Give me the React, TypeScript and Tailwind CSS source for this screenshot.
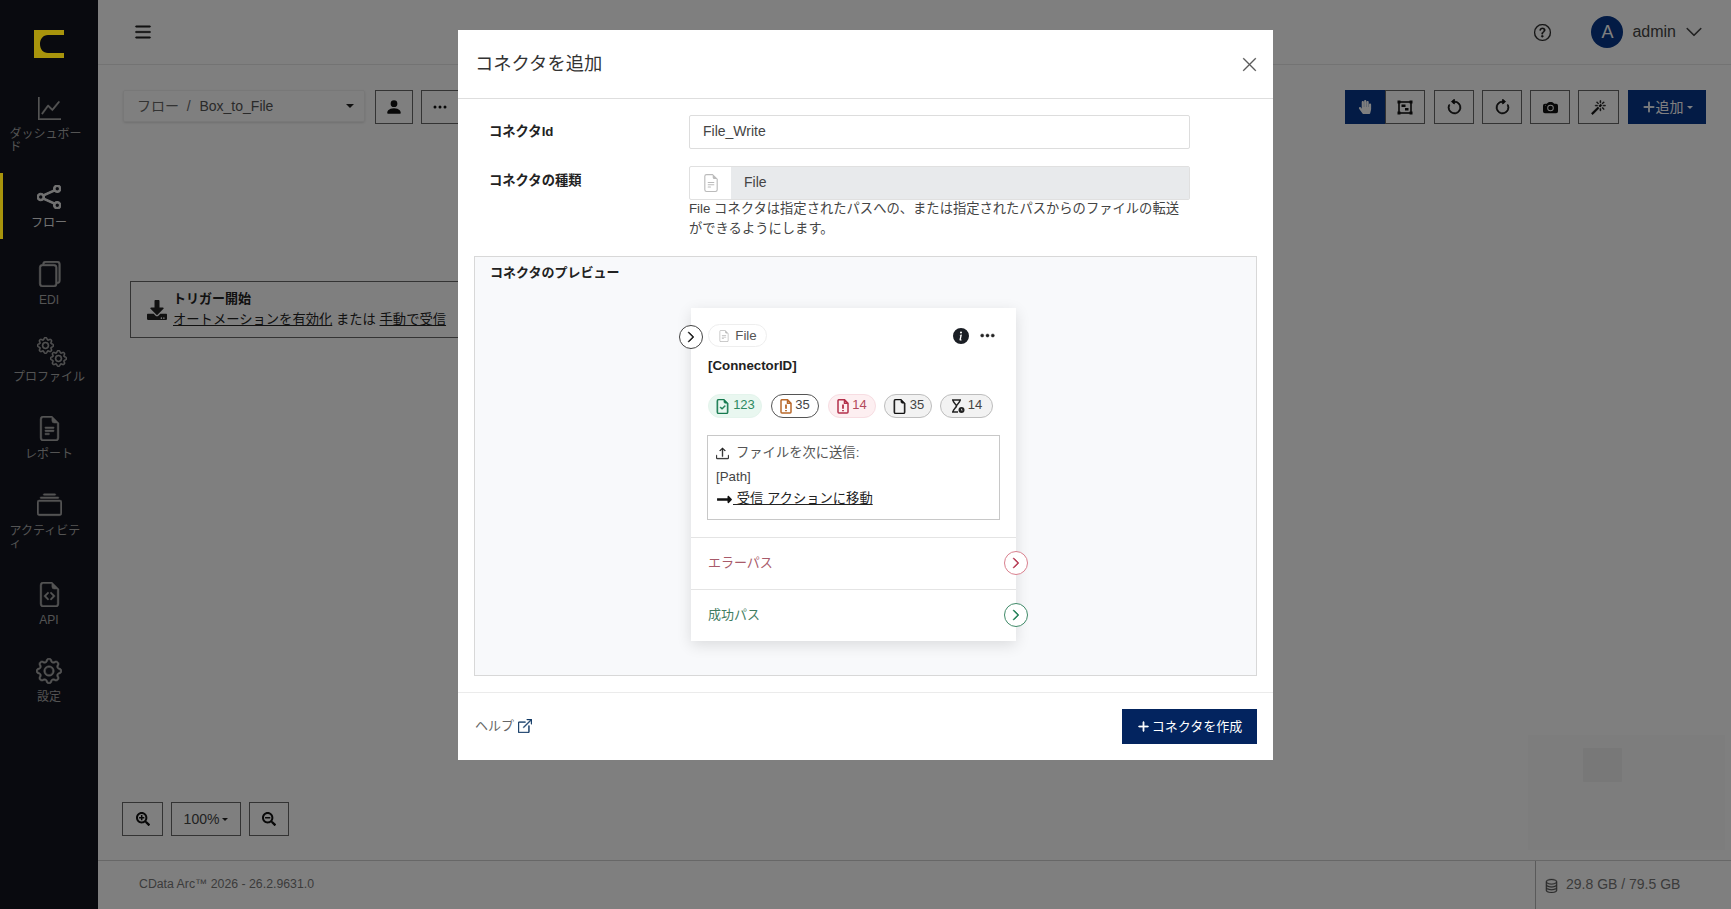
import type { ReactNode } from "react";
import {
  BsArrowClockwise,
  BsArrowCounterclockwise,
  BsBoxArrowUpRight,
  BsCameraFill,
  BsChevronDown,
  BsChevronRight,
  BsCollection,
  BsDatabase,
  BsFileEarmark,
  BsFileEarmarkCheck,
  BsFileEarmarkCode,
  BsFileEarmarkText,
  BsFiles,
  BsGear,
  BsGraphUp,
  BsInfoCircleFill,
  BsList,
  BsMagic,
  BsPersonFill,
  BsPlusLg,
  BsQuestionCircle,
  BsShare,
  BsThreeDots,
  BsUpload,
  BsXLg,
} from "react-icons/bs";
import { FaDownload, FaHandPaper, FaLongArrowAltRight, FaSearchMinus, FaSearchPlus } from "react-icons/fa";

const navItems: { label: string; icon: ReactNode; active?: boolean }[] = [
  { label: "ダッシュボード", icon: <BsGraphUp className="h-[23px] w-[23px] stroke-[0.3]" /> },
  { label: "フロー", icon: <BsShare className="h-[24px] w-[24px] stroke-[0.7]" />, active: true },
  { label: "EDI", icon: <BsFiles className="h-[26px] w-[26px] stroke-[0.3]" /> },
  {
    label: "プロファイル",
    icon: (
      <span className="relative ml-[6px] mt-[2px] block h-[30px] w-[30px]">
        <BsGear className="absolute left-0 top-0 h-[17px] w-[17px] stroke-[0.5]" />
        <BsGear className="absolute bottom-0 right-0 h-[17px] w-[17px] stroke-[0.5]" />
      </span>
    ),
  },
  { label: "レポート", icon: <BsFileEarmarkText className="h-[25px] w-[25px] stroke-[0.3]" /> },
  { label: "アクティビティ", icon: <BsCollection className="h-[25px] w-[25px] stroke-[0.3]" /> },
  { label: "API", icon: <BsFileEarmarkCode className="h-[25px] w-[25px] stroke-[0.3]" /> },
  { label: "設定", icon: <BsGear className="h-[26px] w-[26px] stroke-[0.3]" /> },
];

function Sidebar() {
  return (
    <aside className="flex w-[98px] shrink-0 flex-col bg-[#12141e]">
      <div className="relative z-20 flex h-[84px] justify-center pt-[30px]">
        <svg width="30" height="28" viewBox="0 0 30 28" fill="#a8940c">
          <path d="M0 0H30V5H14C9 5 6 9 6 14C6 19 9 23 14 23H30V28H0Z" />
        </svg>
      </div>
      <nav className="flex flex-col gap-[11px]">
        {navItems.map((item) => (
          <div
            key={item.label}
            className={`relative flex flex-col items-center pt-[10px] ${item.label.length > 6 ? "min-h-[78px]" : "min-h-[66px]"} ${
              item.active ? "text-[#e4e4e4]" : "text-[#a8a8a8]"
            }`}
          >
            {item.active && <span className="absolute inset-y-0 left-0 z-20 w-[3px] bg-[#a8940c]" />}
            <div className="flex h-[28px] items-center justify-center">{item.icon}</div>
            <div className="mt-[6px] max-w-[79px] text-left text-[12px] leading-[13px] [line-break:anywhere]">{item.label}</div>
          </div>
        ))}
      </nav>
    </aside>
  );
}

function ToolButton({ children, className = "" }: { children: ReactNode; className?: string }) {
  return (
    <div className={`flex h-[34px] items-center justify-center border border-[#666] bg-white text-[#111] ${className}`}>
      {children}
    </div>
  );
}

function TopBar() {
  return (
    <header className="flex h-[65px] shrink-0 items-center border-b border-[#e6e6e6] bg-white pl-[34px] pr-[28px]">
      <BsList className="h-[22px] w-[22px] stroke-[0.4] text-[#222]" />
      <div className="ml-auto flex items-center">
        <BsQuestionCircle className="h-[17px] w-[17px] stroke-[0.3] text-[#222]" />
        <div className="ml-[40px] flex h-[32px] w-[32px] items-center justify-center rounded-full bg-[#06378a] text-[18px] text-white">
          A
        </div>
        <span className="ml-[9px] text-[16px] text-[#444]">admin</span>
        <BsChevronDown className="ml-[9px] h-[18px] w-[18px] stroke-[0.4] text-[#333]" />
      </div>
    </header>
  );
}

function Canvas() {
  return (
    <div className="relative flex flex-1 flex-col bg-white px-[25px] pb-[24px] pt-[25px]">
      <div className="flex items-start">
        <div className="flex h-[32px] w-[242px] items-center justify-between rounded-[2px] border border-[#f0f0f0] pl-[13px] pr-[10px] text-[14px] text-[#666] shadow-sm">
          <span>
            フロー&nbsp; / &nbsp;<span className="ml-[1px] text-[#555]">Box_to_File</span>
          </span>
          <span className="h-0 w-0 border-x-[4px] border-t-[4px] border-x-transparent border-t-[#222]" />
        </div>
        <ToolButton className="ml-[10px] w-[38px]">
          <BsPersonFill className="h-[18px] w-[18px]" />
        </ToolButton>
        <ToolButton className="ml-[8px] w-[38px]">
          <BsThreeDots className="h-[16px] w-[16px]" />
        </ToolButton>
        <div className="ml-auto flex items-center">
          <div className="flex h-[34px] w-[40px] items-center justify-center bg-[#06378a] text-white">
            <FaHandPaper className="h-[14px] w-[14px]" />
          </div>
          <ToolButton className="w-[40px]">
            <svg width="16" height="15" viewBox="0 0 16 15" fill="none" stroke="#111" strokeWidth="1.6">
              <rect x="2" y="2" width="12" height="11" />
              <rect x="0.5" y="0.5" width="3" height="3" fill="#111" stroke="none" />
              <rect x="12.5" y="0.5" width="3" height="3" fill="#111" stroke="none" />
              <rect x="0.5" y="11.5" width="3" height="3" fill="#111" stroke="none" />
              <rect x="12.5" y="11.5" width="3" height="3" fill="#111" stroke="none" />
              <path d="M4.5 4.5h4v2.5h-4zM8 8h3.5v2.5H8z" fill="#111" stroke="none" />
            </svg>
          </ToolButton>
          <ToolButton className="ml-[9px] w-[40px]">
            <BsArrowCounterclockwise className="h-[17px] w-[17px] stroke-[0.7]" />
          </ToolButton>
          <ToolButton className="ml-[8px] w-[40px]">
            <BsArrowClockwise className="h-[17px] w-[17px] stroke-[0.7]" />
          </ToolButton>
          <ToolButton className="ml-[8px] w-[40px]">
            <BsCameraFill className="h-[15px] w-[15px]" />
          </ToolButton>
          <ToolButton className="ml-[8px] w-[41px]">
            <BsMagic className="h-[15px] w-[15px] stroke-[0.5]" />
          </ToolButton>
          <div className="ml-[9px] flex h-[34px] w-[78px] items-center justify-center bg-[#06378a] text-[14px] text-white">
            <BsPlusLg className="h-[14px] w-[14px] stroke-1" />
            <span>追加</span>
            <span className="ml-[3px] h-0 w-0 border-x-[3px] border-t-[3px] border-x-transparent border-t-white" />
          </div>
        </div>
      </div>

      <div className="ml-[7px] mt-[157px] flex h-[57px] w-[420px] items-center border border-[#666] bg-white pl-[16px] text-[#222]">
        <FaDownload className="h-[20px] w-[20px]" />
        <div className="ml-[6px]">
          <div className="text-[13px] font-bold leading-[18px]">トリガー開始</div>
          <div className="mt-[3px] text-[13.3px] leading-[18px]">
            <span className="underline">オートメーションを有効化</span> または <span className="underline">手動で受信</span>
          </div>
        </div>
      </div>

      <div className="ml-[-1px] mt-auto flex items-center gap-[8px] text-[#222]">
        <ToolButton className="w-[41px]">
          <FaSearchPlus className="h-[14px] w-[14px]" />
        </ToolButton>
        <ToolButton className="w-[70px] text-[14px]">
          <span className="text-[#444]">100%</span>
          <span className="ml-[3px] h-0 w-0 border-x-[3px] border-t-[3px] border-x-transparent border-t-[#222]" />
        </ToolButton>
        <ToolButton className="w-[40px]">
          <FaSearchMinus className="h-[14px] w-[14px]" />
        </ToolButton>
      </div>

      {/* minimap */}
      <div className="absolute bottom-[10px] right-[6px] h-[115px] w-[197px] bg-[#fbfbfb]">
        <div className="ml-[55px] mt-[13px] h-[34px] w-[39px] rounded-[1px] bg-[#f0f0f0]" />
      </div>
    </div>
  );
}

function BottomBar() {
  return (
    <footer className="flex h-[49px] shrink-0 items-center justify-between border-t border-[#cfcfcf] bg-white pl-[41px] text-[12.3px] text-[#777]">
      <span className="-mt-[2px]">CData Arc™ 2026 - 26.2.9631.0</span>
      <div className="flex h-full w-[196px] items-center border-l border-[#b5b5b5] pl-[8px] text-[14px]">
        <BsDatabase className="h-[15px] w-[15px] stroke-[0.3] text-[#555]" />
        <span className="-mt-[2px] ml-[7px]">29.8 GB / 79.5 GB</span>
      </div>
    </footer>
  );
}

function HourglassIcon() {
  return (
    <svg width="14" height="15" viewBox="0 0 14 15" fill="none" stroke="#222" strokeWidth="1.5">
      <path d="M1 1h9M1 13h6M2 1c0 3 3 4 3.5 6C5 9 2 10 2 13M9 1c0 3-3 4-3.5 6" />
      <circle cx="10.5" cy="11" r="3" fill="#222" stroke="none" />
      <path d="M10.5 9.8v1.4h1" stroke="#fff" strokeWidth=".7" />
    </svg>
  );
}

function WarnFile({ color }: { color: string }) {
  return (
    <svg width="12" height="15" viewBox="0 0 12 15" fill="none" stroke={color} strokeWidth="1.5">
      <path d="M1 1.7A1 1 0 0 1 2 .7h5.5L11 4.2V13a1 1 0 0 1-1 1H2a1 1 0 0 1-1-1zM7.5.7v3.5H11" />
      <path d="M6 5.5v4.2M6 11v1.3" strokeWidth="1.8" />
    </svg>
  );
}

const badges: { value: string; icon: ReactNode; className: string }[] = [
  {
    value: "123",
    icon: <BsFileEarmarkCheck className="h-[15px] w-[15px] stroke-[0.6] text-[#16794f]" />,
    className: "w-[54px] bg-[#e9f7f0] border-[#e4f4ec] text-[#2d8a60]",
  },
  {
    value: "35",
    icon: <WarnFile color="#b9692b" />,
    className: "ml-[9px] w-[48px] border-[#555] bg-white text-[#444]",
  },
  {
    value: "14",
    icon: <WarnFile color="#b3314b" />,
    className: "ml-[9px] w-[48px] border-[#f7dde2] bg-[#fdeff1] text-[#b3485c]",
  },
  {
    value: "35",
    icon: <BsFileEarmark className="h-[15px] w-[15px] stroke-[0.6] text-[#111]" />,
    className: "ml-[8px] w-[48px] border-[#bdbdbd] bg-[#f2f2f2] text-[#444]",
  },
  {
    value: "14",
    icon: <HourglassIcon />,
    className: "ml-[8px] w-[53px] border-[#bdbdbd] bg-[#f2f2f2] text-[#444]",
  },
];

function PathRow({ label, tone, ring, arrow }: { label: string; tone: string; ring: string; arrow: string }) {
  return (
    <div className="relative flex h-[52px] items-center border-t border-[#e4e4e4] pl-[17px] text-[13px]">
      <span className={`-mt-[2px] ${tone}`}>{label}</span>
      <div className={`absolute right-[-12px] top-[13px] flex h-[24px] w-[24px] items-center justify-center rounded-full border bg-white ${ring}`}>
        <BsChevronRight className={`h-[12px] w-[12px] stroke-[1.2] ${arrow}`} />
      </div>
    </div>
  );
}

function ConnectorCard() {
  return (
    <div className="relative ml-[216px] mt-[26px] h-[333px] w-[325px] bg-white pt-[16px] shadow-[0_4px_14px_rgba(0,0,0,0.12)]">
      <div className="absolute left-[-12px] top-[17px] flex h-[24px] w-[24px] items-center justify-center rounded-full border border-[#444] bg-white">
        <BsChevronRight className="h-[12px] w-[12px] stroke-[1.2] text-[#111]" />
      </div>
      <div className="flex items-center pl-[17px] pr-[20px]">
        <div className="flex h-[23px] w-[59px] items-center justify-center rounded-full border border-[#eee] text-[13.3px] text-[#555]">
          <BsFileEarmarkText className="mr-[5px] h-[12px] w-[12px] text-[#bbb]" />
          File
        </div>
        <BsInfoCircleFill className="ml-auto h-[16px] w-[16px] text-[#1a1e24]" />
        <BsThreeDots className="ml-[10px] h-[17px] w-[17px] stroke-[0.4] text-[#222]" />
      </div>
      <div className="mt-[9px] pl-[17px] text-[13.3px] font-bold leading-[20px] text-[#222]">[ConnectorID]</div>
      <div className="mt-[18px] flex pl-[17px]">
        {badges.map((b, i) => (
          <div key={i} className={`flex h-[24px] items-center justify-center gap-[3px] rounded-full border text-[13px] ${b.className}`}>
            {b.icon}
            <span className="-mt-[2px]">{b.value}</span>
          </div>
        ))}
      </div>
      <div className="mx-[16px] mt-[17px] h-[85px] border border-[#c8c8c8] px-[8px] pt-[6px] text-[13.3px] leading-[22px] text-[#444]">
        <div className="flex items-center">
          <BsUpload className="mr-[7px] h-[13px] w-[13px] stroke-[0.5] text-[#222]" />
          <span className="text-[#555]">ファイルを次に送信:</span>
        </div>
        <div className="mt-[2px]">[Path]</div>
        <div className="flex items-center text-[#222]">
          <FaLongArrowAltRight className="h-[17px] w-[17px] text-[#111]" />
          <span className="underline">&nbsp;受信 アクションに移動</span>
        </div>
      </div>
      <div className="mt-[17px]">
        <PathRow label="エラーパス" tone="text-[#a85a6a]" ring="border-[#d9808e]" arrow="text-[#b3314b]" />
        <PathRow label="成功パス" tone="text-[#3f7d62]" ring="border-[#3f8a68]" arrow="text-[#16794f]" />
      </div>
    </div>
  );
}

function AddConnectorModal() {
  return (
    <div className="absolute left-[458px] top-[30px] z-30 flex h-[730px] w-[815px] flex-col bg-white text-[#222]">
      <div className="flex h-[69px] shrink-0 items-center justify-between border-b border-[#dedede] pl-[17px] pr-[15px]">
        <h2 className="text-[18.3px] font-normal text-[#333]">コネクタを追加</h2>
        <BsXLg className="h-[17px] w-[17px] stroke-[0.3] text-[#555]" />
      </div>
      <div className="flex flex-1 flex-col px-[16px] pt-[16px]">
        <div className="flex items-center pl-[15px]">
          <label className="w-[200px] text-[13.3px] font-bold">コネクタId</label>
          <div className="flex h-[34px] w-[501px] items-center rounded-[2px] border border-[#ddd] pb-[2px] pl-[13px] text-[14px] text-[#444]">
            File_Write
          </div>
        </div>
        <div className="mt-[17px] flex items-start pl-[15px]">
          <label className="w-[200px] pt-[5px] text-[13.3px] font-bold leading-[20px]">コネクタの種類</label>
          <div className="w-[501px]">
            <div className="flex h-[34px] rounded-[2px] border border-[#e0e0e0]">
              <div className="flex w-[41px] items-center justify-center">
                <BsFileEarmarkText className="h-[18px] w-[18px] text-[#bbb]" />
              </div>
              <div className="flex flex-1 items-center bg-[#e8eaec] pb-[2px] pl-[13px] text-[14px] text-[#444]">File</div>
            </div>
            <p className="-mt-px text-[13.3px] leading-[20px] text-[#444]">
              File コネクタは指定されたパスへの、または指定されたパスからのファイルの転送ができるようにします。
            </p>
          </div>
        </div>
        <div className="mt-[17px] h-[420px] border border-[#d8d8d8] bg-[#f8f9fb] pt-[7px]">
          <div className="pl-[15px] text-[13px] font-bold leading-[18px]">コネクタのプレビュー</div>
          <ConnectorCard />
        </div>
      </div>
      <div className="flex h-[68px] shrink-0 items-center justify-between border-t border-[#ebebeb] pl-[17px] pr-[16px]">
        <div className="-mt-[2px] flex items-center text-[13px] text-[#666]">
          ヘルプ
          <BsBoxArrowUpRight className="ml-[4px] h-[14px] w-[14px] stroke-[0.6] text-[#123a66]" />
        </div>
        <div className="flex h-[35px] w-[135px] items-center justify-center bg-[#03245f] text-[13px] text-white">
          <BsPlusLg className="mr-[2px] h-[13px] w-[13px] stroke-[1.2]" />
          コネクタを作成
        </div>
      </div>
    </div>
  );
}

export default function App() {
  return (
    <div className="relative flex h-[909px] w-[1731px] overflow-hidden font-['Liberation_Sans','Noto_Sans_CJK_JP',sans-serif]">
      <Sidebar />
      <main className="flex min-w-0 flex-1 flex-col">
        <TopBar />
        <Canvas />
        <BottomBar />
      </main>
      <div className="absolute inset-0 z-10 bg-[rgba(0,0,0,0.5)]" />
      <AddConnectorModal />
    </div>
  );
}
